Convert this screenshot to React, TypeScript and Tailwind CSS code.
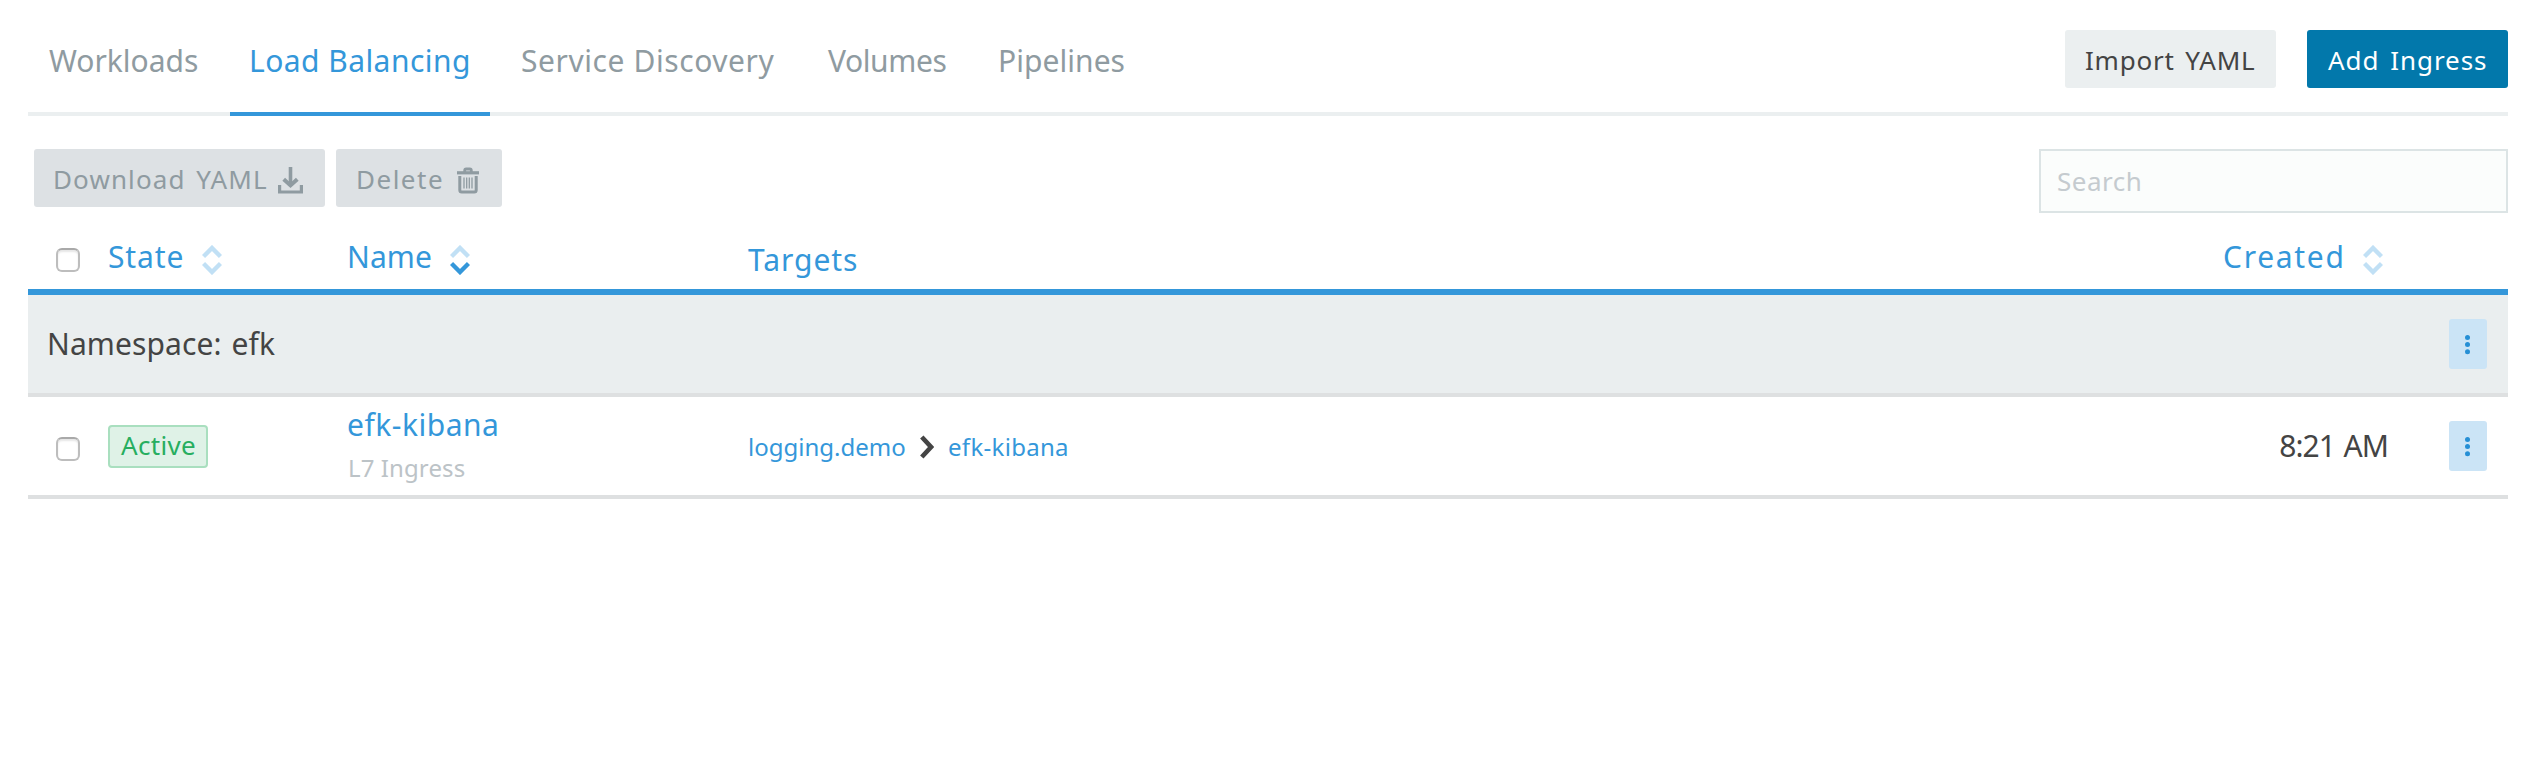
const TABS = [
  { label: "Workloads", cls: "w-[202px] pl-[21px] tracking-[0px]" },
  { label: "Load Balancing", cls: "w-[260px] pl-[19px] tracking-[0.45px]", active: true },
  { label: "Service Discovery", cls: "w-[317px] pl-[31px] tracking-[0.57px]" },
  { label: "Volumes", cls: "w-[173px] pl-[21px] tracking-[-0.4px]" },
  { label: "Pipelines", cls: "w-[166px] pl-[18px] tracking-[0.05px]" },
];

const GRID = "grid grid-cols-[80px_239px_401px_1fr_200px_119px]";

function SortIcon({ down = false }: { down?: boolean }) {
  return (
    <svg className="h-[30px] w-[20px] shrink-0" viewBox="0 0 20 30" fill="none" strokeWidth="4.4">
      <path d="M1.5 11.5L10 3L18.5 11.5" stroke="#c1e0f5" />
      <path d="M1.5 18.5L10 27L18.5 18.5" stroke={down ? "#3497da" : "#c1e0f5"} />
    </svg>
  );
}

function DownloadIcon() {
  return (
    <svg className="h-[27px] w-[25px]" viewBox="0 0 25 27" fill="none" stroke="#8f9ba1">
      <path d="M12.5 0V19" strokeWidth="3.6" />
      <path d="M5.7 12.2L12.5 18.4L19.3 12.2" strokeWidth="4" />
      <path d="M1.6 18V25H23.4V18" strokeWidth="3.2" />
    </svg>
  );
}

function TrashIcon() {
  return (
    <svg className="h-[27px] w-[22px]" viewBox="0 0 22 27" fill="none" stroke="#8f9ba1">
      <path d="M0 5.8H22" strokeWidth="3.2" />
      <path d="M7.7 5V3.5Q7.7 2 9.2 2H12.8Q14.3 2 14.3 3.5V5" strokeWidth="2.8" />
      <path d="M2.8 9V23Q2.8 25 4.8 25H17.2Q19.2 25 19.2 23V9" strokeWidth="3" />
      <path d="M7 10.5V21.5M9.7 10.5V21.5M12.3 10.5V21.5M15 10.5V21.5" strokeWidth="1.3" />
    </svg>
  );
}

function Checkbox() {
  return (
    <span className="ml-[28px] block size-[24px] rounded-[6px] border-2 border-[#bdbdbd] border-t-[#a9a9a9] bg-white shadow-[inset_0_2px_2px_#e6e6e6]" />
  );
}

function MenuButton() {
  return (
    <button className="flex h-[50px] w-[38px] items-center justify-center rounded-[3px] bg-[#cbe4f6]">
      <svg className="h-[22px] w-[6px]" viewBox="0 0 6 22" fill="#268fd5">
        <circle cx="2.5" cy="4.4" r="2.5" />
        <circle cx="2.5" cy="11.6" r="2.5" />
        <circle cx="2.5" cy="18.8" r="2.5" />
      </svg>
    </button>
  );
}

export default function App() {
  return (
    <div className="min-h-[774px] bg-white pr-[38px] pl-[28px] font-['Noto_Sans',sans-serif] text-[30px] text-[#444444]">
      <header className="flex h-[116px] items-start justify-between border-b-4 border-[#ebeff0]">
        <nav className="flex">
          {TABS.map((t) => (
            <a
              key={t.label}
              className={`flex h-[116px] items-center border-b-4 pt-[8px] whitespace-nowrap ${t.cls} ${
                t.active ? "border-[#3497da] text-[#3497da]" : "border-transparent text-[#8f9ba1]"
              }`}
            >
              {t.label}
            </a>
          ))}
        </nav>
        <div className="flex gap-[31px] pt-[30px] text-[26px] whitespace-nowrap">
          <button className="h-[58px] w-[211px] rounded-[3px] bg-[#ebeff0] pt-[2px] pl-[20px] text-left tracking-[0.8px] [word-spacing:3px]">
            Import YAML
          </button>
          <button className="h-[58px] w-[201px] rounded-[3px] bg-[#0278ab] pt-[2px] pl-[21px] text-left tracking-[0.95px] text-white [word-spacing:3px]">
            Add Ingress
          </button>
        </div>
      </header>

      <div className="flex h-[97px] items-start justify-between pt-[33px] text-[26px]">
        <div className="flex gap-[11px] pl-[6px] text-[#8f9ba1]">
          <button className="flex h-[58px] w-[291px] items-center rounded-[3px] bg-[#dde1e4] pl-[19px] tracking-[1.1px]">
            <span className="w-[225px] pt-[3px] text-left whitespace-nowrap [word-spacing:3px]">Download YAML</span>
            <span className="pt-[5px]"><DownloadIcon /></span>
          </button>
          <button className="flex h-[58px] w-[166px] items-center rounded-[3px] bg-[#dde1e4] pl-[20px] tracking-[1.5px]">
            <span className="w-[101px] pt-[3px] text-left">Delete</span>
            <span className="pt-[5px]"><TrashIcon /></span>
          </button>
        </div>
        <input
          placeholder="Search"
          className="h-[64px] w-[469px] border-2 border-[#dce4e5] bg-[#fbfdfc] pb-[1px] pl-[16px] tracking-[0.5px] placeholder:text-[#c5cbcf]"
        />
      </div>

      <div className={`${GRID} h-[82px] items-center border-b-[6px] border-[#3497da] pt-[18px] text-[#3497da]`}>
        <Checkbox />
        <div className="flex items-center">
          <span className="w-[94px] pb-[8px] tracking-[0.9px]">State</span>
          <SortIcon />
        </div>
        <div className="flex items-center">
          <span className="w-[103px] pb-[8px] tracking-[0.1px]">Name</span>
          <SortIcon down />
        </div>
        <div className="pb-[2px] tracking-[0.95px]">Targets</div>
        <div className="col-start-5 flex items-center justify-end pr-[6px]">
          <span className="w-[140px] pb-[8px] tracking-[1.7px]">Created</span>
          <SortIcon />
        </div>
      </div>

      <div className="flex h-[102px] items-center justify-between border-b-4 border-[#dee0e1] bg-[#eaeeef] pr-[21px] pl-[19px]">
        <span className="pb-[2px] tracking-[0.1px] [word-spacing:2px]">Namespace: efk</span>
        <MenuButton />
      </div>

      <div className={`${GRID} h-[102px] items-center border-b-4 border-[#dee0e1]`}>
        <div className="pt-[6px]"><Checkbox /></div>
        <div>
          <span className="flex h-[43px] w-[100px] items-center rounded-[4px] border-2 border-[#a9dfbf] bg-[#dff2e7] pb-[1px] pl-[11px] text-[26px] tracking-[0.3px] text-[#27ae60]">
            Active
          </span>
        </div>
        <div>
          <div className="leading-[43px] tracking-[0.5px] text-[#3497da]">efk-kibana</div>
          <div className="pl-px text-[24px] leading-[43px] tracking-[0.1px] text-[#bcc3c7]">L7 Ingress</div>
        </div>
        <div className="flex items-center pt-[1px] text-[24px] text-[#3497da]">
          <span className="w-[172px]">logging.demo</span>
          <svg className="h-[24px] w-[14px]" viewBox="0 0 14 24" fill="none" stroke="#444444" strokeWidth="4.6">
            <path d="M1.8 2L11 12L1.8 22" />
          </svg>
          <span className="pl-[14px] tracking-[0.3px]">efk-kibana</span>
        </div>
        <div className="pr-[1px] pb-[2px] text-right tracking-[-1px] [word-spacing:2px]">8:21 AM</div>
        <div className="pl-[60px]"><MenuButton /></div>
      </div>
    </div>
  );
}
